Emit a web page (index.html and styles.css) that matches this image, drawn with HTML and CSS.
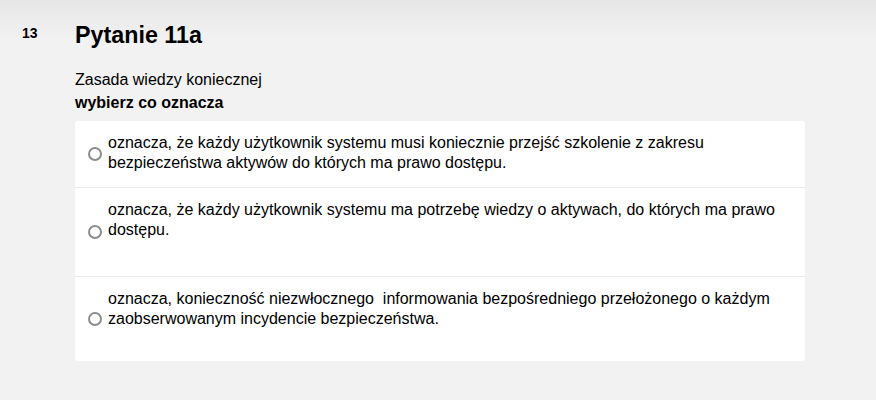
FILE: index.html
```html
<!DOCTYPE html>
<html lang="pl">
<head>
<meta charset="utf-8">
<title>Pytanie 11a</title>
<link rel="stylesheet" href="styles.css">
</head>
<body>
<div class="page">
  <div class="qnum">13</div>
  <div class="qbody">
    <h1 class="qtitle">Pytanie 11a</h1>
    <p class="qdesc">Zasada wiedzy koniecznej</p>
    <p class="qdesc qdesc-bold">wybierz co oznacza</p>
    <div class="card">
      <label class="option opt-1">
        <span class="radio"></span>
        <span class="opt-text">oznacza, że każdy użytkownik systemu musi koniecznie przejść szkolenie z zakresu bezpieczeństwa aktywów do których ma prawo dostępu.</span>
      </label>
      <label class="option opt-2">
        <span class="radio"></span>
        <span class="opt-text">oznacza, że każdy użytkownik systemu ma potrzebę wiedzy o aktywach, do których ma prawo dostępu.</span>
      </label>
      <label class="option opt-3">
        <span class="radio"></span>
        <span class="opt-text">oznacza, konieczność niezwłocznego&nbsp; informowania bezpośredniego przełożonego o każdym zaobserwowanym incydencie bezpieczeństwa.</span>
      </label>
    </div>
  </div>
</div>
</body>
</html>
```

FILE: styles.css
```css
html, body {
  margin: 0;
  padding: 0;
}
body {
  background: linear-gradient(#e6e6e6 0px, #f2f2f2 40px) no-repeat, #f2f2f2;
  min-height: 400px;
  font-family: "Liberation Sans", Arial, sans-serif;
  color: #000;
}
.page {
  display: flex;
  padding: 21px 0 0 22px;
}
.qnum {
  width: 53px;
  flex: none;
  font-size: 14px;
  font-weight: bold;
  line-height: 20px;
  padding-top: 2px;
}
.qbody {
  width: 730px;
}
.qtitle {
  margin: 0 0 19px 0;
  font-size: 23.3px;
  line-height: 28px;
  font-weight: bold;
}
.qdesc {
  margin: 0;
  font-size: 16px;
  line-height: 23px;
}
.qdesc-bold {
  font-weight: bold;
}
.card {
  margin-top: 7px;
  background: #fff;
  border-radius: 3px;
}
.option {
  display: flex;
  align-items: center;
  padding: 0 20px 0 13px;
  font-size: 16px;
  line-height: 20px;
  border-top: 1px solid #ececec;
}
.option.opt-1 {
  border-top: none;
}
.opt-text {
  flex: 1;
  padding: 12px 0 14px 0;
}
.opt-2 .opt-text {
  padding-bottom: 36px;
}
.opt-3 .opt-text {
  padding-bottom: 32px;
}
.radio {
  flex: none;
  width: 10px;
  height: 10px;
  border: 2px solid #8d8d8d;
  border-radius: 50%;
  margin-right: 6px;
  background: #fff;
}
```
